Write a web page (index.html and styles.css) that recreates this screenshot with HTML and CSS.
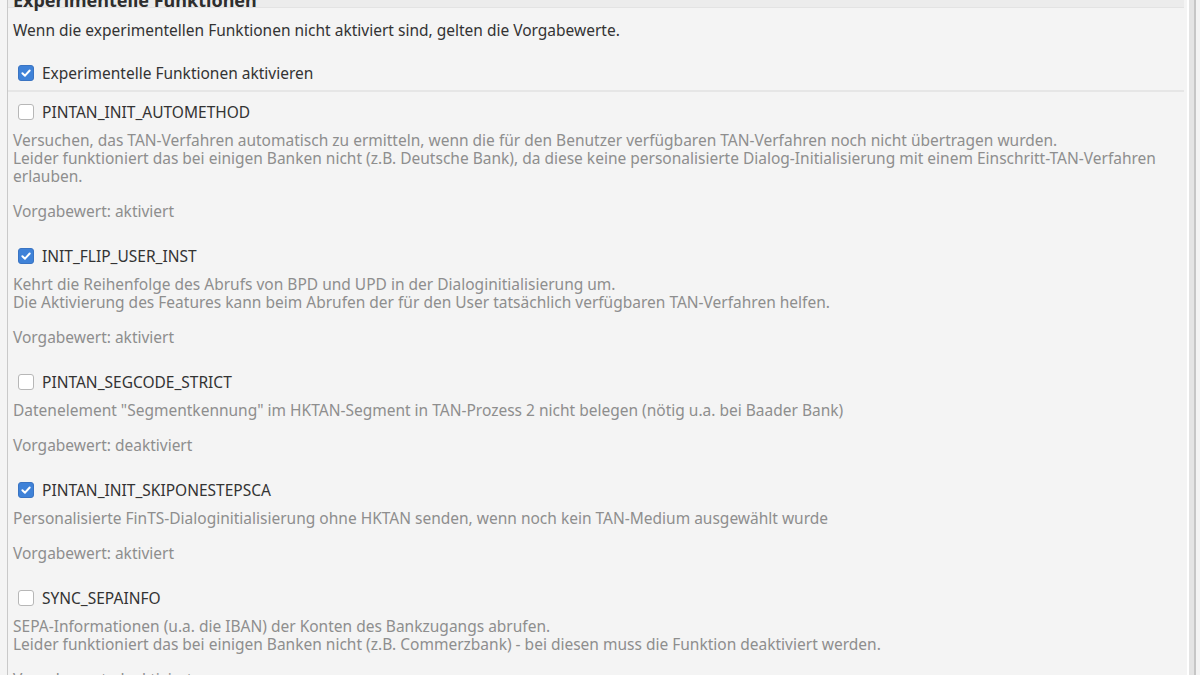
FILE: index.html
```html
<!DOCTYPE html>
<html lang="de">
<head>
<meta charset="utf-8">
<title>Experimentelle Funktionen</title>
<link rel="stylesheet" href="styles.css">
</head>
<body>
<div class="window">
  <div class="panel">
    <div class="title-bar"><h2 class="title">Experimentelle Funktionen</h2></div>
    <p class="intro">Wenn die experimentellen Funktionen nicht aktiviert sind, gelten die Vorgabewerte.</p>
    <label class="check master"><span class="box on"><svg viewBox="0 0 14 14"><path d="M3.4 7.2 L6 9.7 L10.7 4.5" /></svg></span>Experimentelle Funktionen aktivieren</label>
    <div class="sep"></div>

    <div class="feature">
      <label class="check"><span class="box"></span>PINTAN_INIT_AUTOMETHOD</label>
      <p class="desc">Versuchen, das TAN-Verfahren automatisch zu ermitteln, wenn die für den Benutzer verfügbaren TAN-Verfahren noch nicht übertragen wurden.<br>Leider funktioniert das bei einigen Banken nicht (z.B. Deutsche Bank), da diese keine personalisierte Dialog-Initialisierung mit einem Einschritt-TAN-Verfahren erlauben.</p>
      <p class="desc default">Vorgabewert: aktiviert</p>
    </div>

    <div class="feature">
      <label class="check"><span class="box on"><svg viewBox="0 0 14 14"><path d="M3.4 7.2 L6 9.7 L10.7 4.5" /></svg></span>INIT_FLIP_USER_INST</label>
      <p class="desc">Kehrt die Reihenfolge des Abrufs von BPD und UPD in der Dialoginitialisierung um.<br>Die Aktivierung des Features kann beim Abrufen der für den User tatsächlich verfügbaren TAN-Verfahren helfen.</p>
      <p class="desc default">Vorgabewert: aktiviert</p>
    </div>

    <div class="feature">
      <label class="check"><span class="box"></span>PINTAN_SEGCODE_STRICT</label>
      <p class="desc">Datenelement "Segmentkennung" im HKTAN-Segment in TAN-Prozess 2 nicht belegen (nötig u.a. bei Baader Bank)</p>
      <p class="desc default">Vorgabewert: deaktiviert</p>
    </div>

    <div class="feature">
      <label class="check"><span class="box on"><svg viewBox="0 0 14 14"><path d="M3.4 7.2 L6 9.7 L10.7 4.5" /></svg></span>PINTAN_INIT_SKIPONESTEPSCA</label>
      <p class="desc">Personalisierte FinTS-Dialoginitialisierung ohne HKTAN senden, wenn noch kein TAN-Medium ausgewählt wurde</p>
      <p class="desc default">Vorgabewert: aktiviert</p>
    </div>

    <div class="feature">
      <label class="check"><span class="box"></span>SYNC_SEPAINFO</label>
      <p class="desc">SEPA-Informationen (u.a. die IBAN) der Konten des Bankzugangs abrufen.<br>Leider funktioniert das bei einigen Banken nicht (z.B. Commerzbank) - bei diesen muss die Funktion deaktiviert werden.</p>
      <p class="desc default">Vorgabewert: deaktiviert</p>
    </div>
  </div>
  <div class="gutter"></div>
</div>
</body>
</html>
```
FILE: styles.css
```css
html, body {
  margin: 0;
  padding: 0;
  height: 100%;
  overflow: hidden;
  background: #f8f8f8;
}
body {
  font-family: "Noto Sans", "Open Sans", sans-serif;
  font-size: 15.5px;
  color: #333333;
}
.window {
  display: flex;
  height: 675px;
  padding-left: 7px;
  background: #f4f4f4;
}
.panel {
  width: 1176px;
  border-left: 1px solid #c9c9c9;
  background: #f4f4f4;
  padding-right: 2px;
  overflow: hidden;
}
.gutter {
  width: 5px;
  border-left: 2px solid #ffffff;
  border-right: 2px solid #c6c6c6;
  background: #e4e4e4;
  margin-left: 1px;
  margin-right: 3px;
}
.title-bar {
  height: 7px;
  background: #ececec;
  border-bottom: 1px solid #e3e3e3;
  position: relative;
}
.title {
  margin: 0;
  position: absolute;
  left: 5px;
  bottom: -3px;
  font-size: 18px;
  font-weight: bold;
  line-height: 20px;
  color: #2e2e2e;
  white-space: nowrap;
}
.intro {
  margin: 14px 0 0 5px;
  line-height: 17px;
}
.check {
  display: flex;
  align-items: center;
  gap: 8px;
  line-height: 18px;
}
.master {
  margin: 25px 0 0 10px;
}
.sep {
  height: 2px;
  background: #e6e6e6;
  margin: 8px 0 0 0;
}
.box {
  width: 14px;
  height: 14px;
  border: 1px solid #b7b7b7;
  border-radius: 3px;
  background: #ffffff;
  flex: none;
  display: flex;
}
.box.on {
  background: #3f82d8;
  border-color: #3a74c2;
}
.box svg {
  width: 14px;
  height: 14px;
}
.box svg path {
  fill: none;
  stroke: #ffffff;
  stroke-width: 2;
  stroke-linecap: round;
  stroke-linejoin: round;
}
.feature {
  padding: 8px 0 0 0;
}
.sep + .feature {
  padding-top: 11px;
}
.feature .check {
  margin-left: 10px;
}
.desc {
  margin: 10px 0 0 5px;
  line-height: 18px;
  color: #8e8e8e;
}
.desc.default {
  margin-top: 17px;
  margin-bottom: 19px;
}
```
